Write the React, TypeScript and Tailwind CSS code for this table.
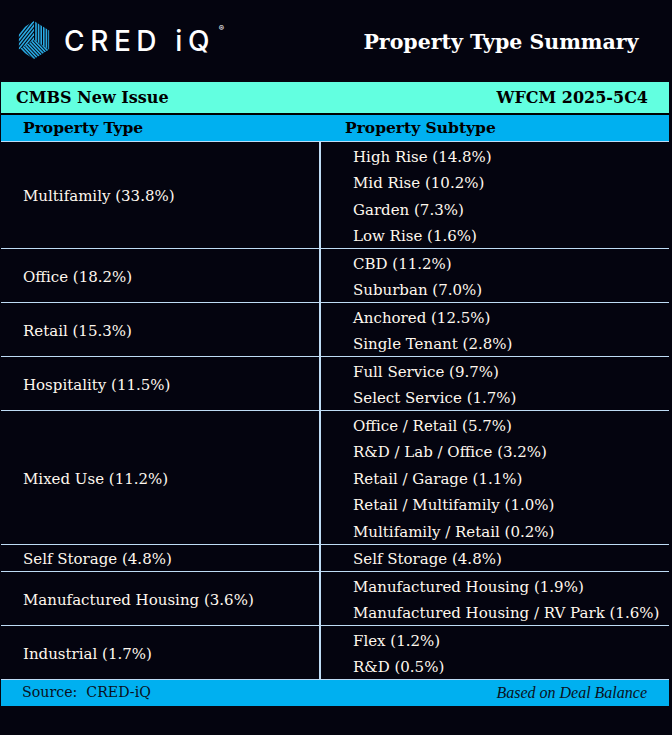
import React from "react";

const groups: { type: string; subs: string[] }[] = [
  { type: "Multifamily (33.8%)", subs: ["High Rise (14.8%)", "Mid Rise (10.2%)", "Garden (7.3%)", "Low Rise (1.6%)"] },
  { type: "Office (18.2%)", subs: ["CBD (11.2%)", "Suburban (7.0%)"] },
  { type: "Retail (15.3%)", subs: ["Anchored (12.5%)", "Single Tenant (2.8%)"] },
  { type: "Hospitality (11.5%)", subs: ["Full Service (9.7%)", "Select Service (1.7%)"] },
  {
    type: "Mixed Use (11.2%)",
    subs: [
      "Office / Retail (5.7%)",
      "R&D / Lab / Office (3.2%)",
      "Retail / Garage (1.1%)",
      "Retail / Multifamily (1.0%)",
      "Multifamily / Retail (0.2%)",
    ],
  },
  { type: "Self Storage (4.8%)", subs: ["Self Storage (4.8%)"] },
  { type: "Manufactured Housing (3.6%)", subs: ["Manufactured Housing (1.9%)", "Manufactured Housing / RV Park (1.6%)"] },
  { type: "Industrial (1.7%)", subs: ["Flex (1.2%)", "R&D (0.5%)"] },
];

function Logo() {
  const c = { x: 17, y: 19 };
  const r = 19;
  const pts = [0, 60, 120, 180, 240, 300].map((a) => {
    const rad = ((a - 90) * Math.PI) / 180;
    return [c.x + r * Math.cos(rad) * 0.92, c.y + r * Math.sin(rad)];
  });
  const [top, ur, lr, bot, ll, ul] = pts;
  const P = (arr: number[][]) => arr.map((p) => p.join(",")).join(" ");
  const stripes = (n: number, fn: (i: number) => string) =>
    Array.from({ length: n }, (_, i) => <path key={i} d={fn(i)} stroke="#29a9e1" strokeWidth="1.6" fill="none" />);
  return (
    <svg width="36" height="40" viewBox="0 0 36 40">
      <defs>
        <clipPath id="fr">
          <polygon points={P([top, ur, lr, [c.x, c.y]])} />
        </clipPath>
        <clipPath id="fl">
          <polygon points={P([top, [c.x, c.y], ll, ul])} />
        </clipPath>
        <clipPath id="fb">
          <polygon points={P([[c.x, c.y], lr, bot, ll])} />
        </clipPath>
      </defs>
      <g clipPath="url(#fr)">{stripes(7, (i) => `M${19 + i * 2.6},-2 L${19 + i * 2.6},40`)}</g>
      <g clipPath="url(#fl)">{stripes(9, (i) => `M${-10 + i * 3.4},30 L${20 + i * 3.4},-8`)}</g>
      <g clipPath="url(#fb)">{stripes(9, (i) => `M${-8 + i * 3.4},14 L${22 + i * 3.4},46`)}</g>
    </svg>
  );
}

export default function App() {
  const serif = { fontFamily: '"DejaVu Serif", serif' } as React.CSSProperties;
  const slab = { fontFamily: '"DejaVu Serif", serif' } as React.CSSProperties;
  return (
    <div className="w-[672px] h-[735px] bg-[#04040f] flex flex-col overflow-hidden">
      <div className="h-[82px] flex items-center shrink-0">
        <div className="flex items-center pl-[17px] w-[336px]">
          <Logo />
          <div
            className="ml-[11px] text-white text-[28px] font-medium tracking-[0.2em] leading-none relative"
            style={{ fontFamily: 'Inter, "DejaVu Sans", sans-serif' }}
          >
            CRED iQ
            <span className="absolute -right-[9px] -top-[3px] text-[8px] tracking-normal">®</span>
          </div>
        </div>
        <div className="flex-1 text-center pr-[6px] pt-[2px]">
          <span className="text-white text-[20.5px] font-bold" style={slab}>
            Property Type Summary
          </span>
        </div>
      </div>
      <div className="mx-[1px] mr-[3px] bg-[#62ffe0] h-[33px] flex items-center justify-between pl-[15px] pr-[21px] border-b-2 border-black text-black text-[16px] font-bold" style={slab}>
        <span>CMBS New Issue</span>
        <span>WFCM 2025-5C4</span>
      </div>
      <div className="mx-[1px] mr-[3px] bg-[#00b0f0] h-[27px] flex items-center text-black text-[15.5px] font-bold border-b border-[#bfdcf5]" style={slab}>
        <span className="w-[320px] pl-[22px]">Property Type</span>
        <span className="pl-[24px]">Property Subtype</span>
      </div>
      <div className="mx-[1px] mr-[3px] text-[#fff8ee] text-[15px]" style={serif}>
        {groups.map((g) => (
          <div key={g.type} className="flex border-b border-[#bfdcf5]">
            <div className="w-[320px] border-r-2 border-[#bfdcf5] flex items-center pl-[22px] pt-[3px]">{g.type}</div>
            <div className="flex-1 pl-[32px]">
              {g.subs.map((s) => (
                <div key={s} className="h-[26.5px] flex items-center pt-[3px]">
                  {s}
                </div>
              ))}
            </div>
          </div>
        ))}
      </div>
      <div className="mx-[1px] mr-[3px] bg-[#00b0f0] h-[26px] flex items-center justify-between pl-[21px] pr-[22px] text-[#0a1020] text-[14.2px]">
        <span className="whitespace-pre" style={serif}>Source:  CRED-iQ</span>
        <span className="italic text-[16px]" style={{ fontFamily: '"Liberation Serif", serif' }}>Based on Deal Balance</span>
      </div>
    </div>
  );
}
